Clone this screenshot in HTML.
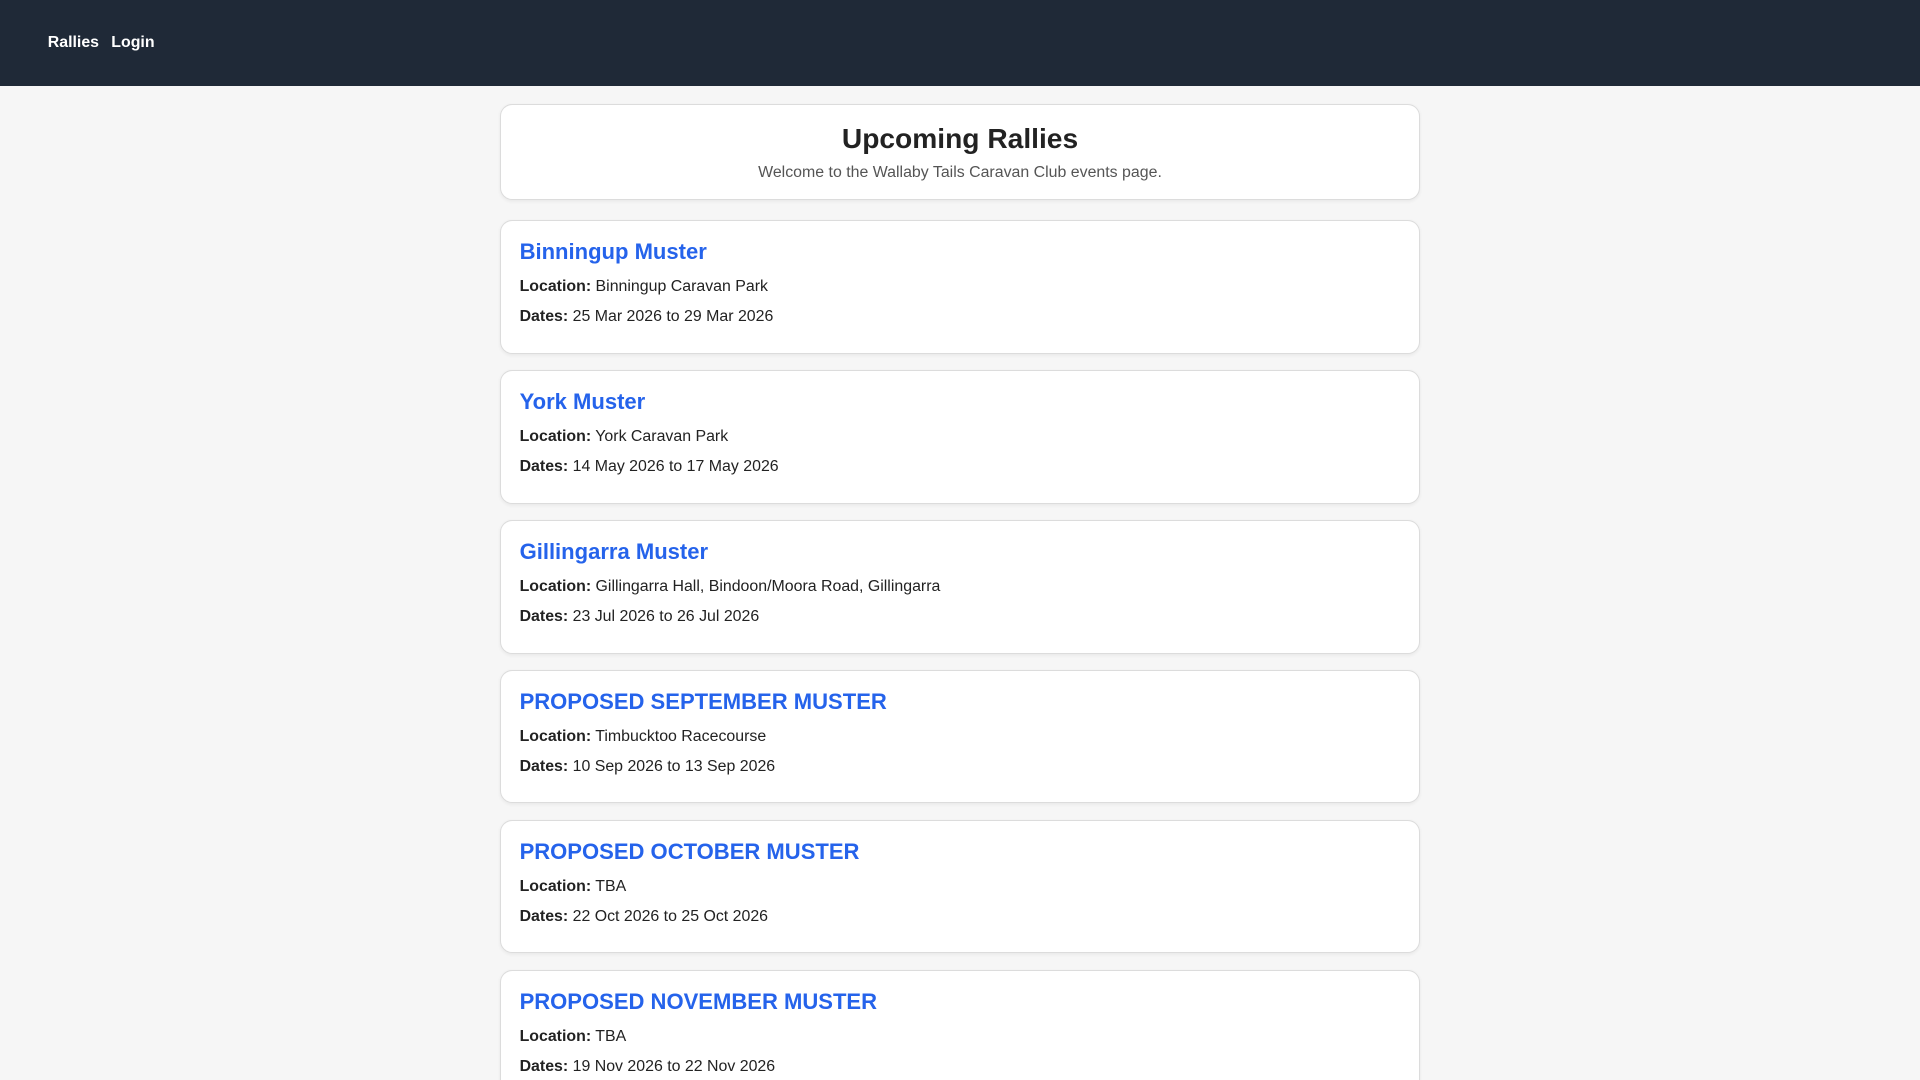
<!DOCTYPE html>
<html><head><meta charset="utf-8"><style>
html{zoom:1.22449;height:882px;overflow:hidden}
body{margin:0;background:#f6f6f6;font-family:"Liberation Sans",Arial,sans-serif;color:#222;height:882px;overflow:hidden}
.nav{height:70px;background:#1f2937;display:flex;align-items:center;padding-left:39px;box-sizing:border-box}
.nav a{color:#fff;font-weight:bold;font-size:13px;text-decoration:none;margin-right:10px}
.wrap{width:751px;margin:15px auto 0}
.card{background:#fff;border:1px solid #dcdcdc;border-radius:10px;box-shadow:0 1px 3px rgba(0,0,0,.06);box-sizing:border-box}
.hero{height:78px;text-align:center;padding-top:13px}
.hero h1{margin:0;font-size:23px;line-height:29px}
.hero p{margin:4px 0 0;font-size:13px;line-height:20px;color:#555}
.r{height:109px;margin-top:17px;padding:13px 15px 0}
.r+.r{margin-top:13.4px}
.r h2{margin:0;font-size:18px;line-height:24px;color:#2563eb}
.r p{margin:7px 0 0;font-size:13px;line-height:20px;color:#222}
.r p+p{margin-top:4.5px}
</style></head><body>
<div class="nav"><a>Rallies</a><a>Login</a></div>
<div class="wrap">
<div class="card hero"><h1>Upcoming Rallies</h1><p>Welcome to the Wallaby Tails Caravan Club events page.</p></div>
<div class="card r"><h2>Binningup Muster</h2><p><b>Location:</b> Binningup Caravan Park</p><p><b>Dates:</b> 25 Mar 2026 to 29 Mar 2026</p></div>
<div class="card r"><h2>York Muster</h2><p><b>Location:</b> York Caravan Park</p><p><b>Dates:</b> 14 May 2026 to 17 May 2026</p></div>
<div class="card r"><h2>Gillingarra Muster</h2><p><b>Location:</b> Gillingarra Hall, Bindoon/Moora Road, Gillingarra</p><p><b>Dates:</b> 23 Jul 2026 to 26 Jul 2026</p></div>
<div class="card r"><h2>PROPOSED SEPTEMBER MUSTER</h2><p><b>Location:</b> Timbucktoo Racecourse</p><p><b>Dates:</b> 10 Sep 2026 to 13 Sep 2026</p></div>
<div class="card r"><h2>PROPOSED OCTOBER MUSTER</h2><p><b>Location:</b> TBA</p><p><b>Dates:</b> 22 Oct 2026 to 25 Oct 2026</p></div>
<div class="card r"><h2>PROPOSED NOVEMBER MUSTER</h2><p><b>Location:</b> TBA</p><p><b>Dates:</b> 19 Nov 2026 to 22 Nov 2026</p></div>
</div>
</body></html>
